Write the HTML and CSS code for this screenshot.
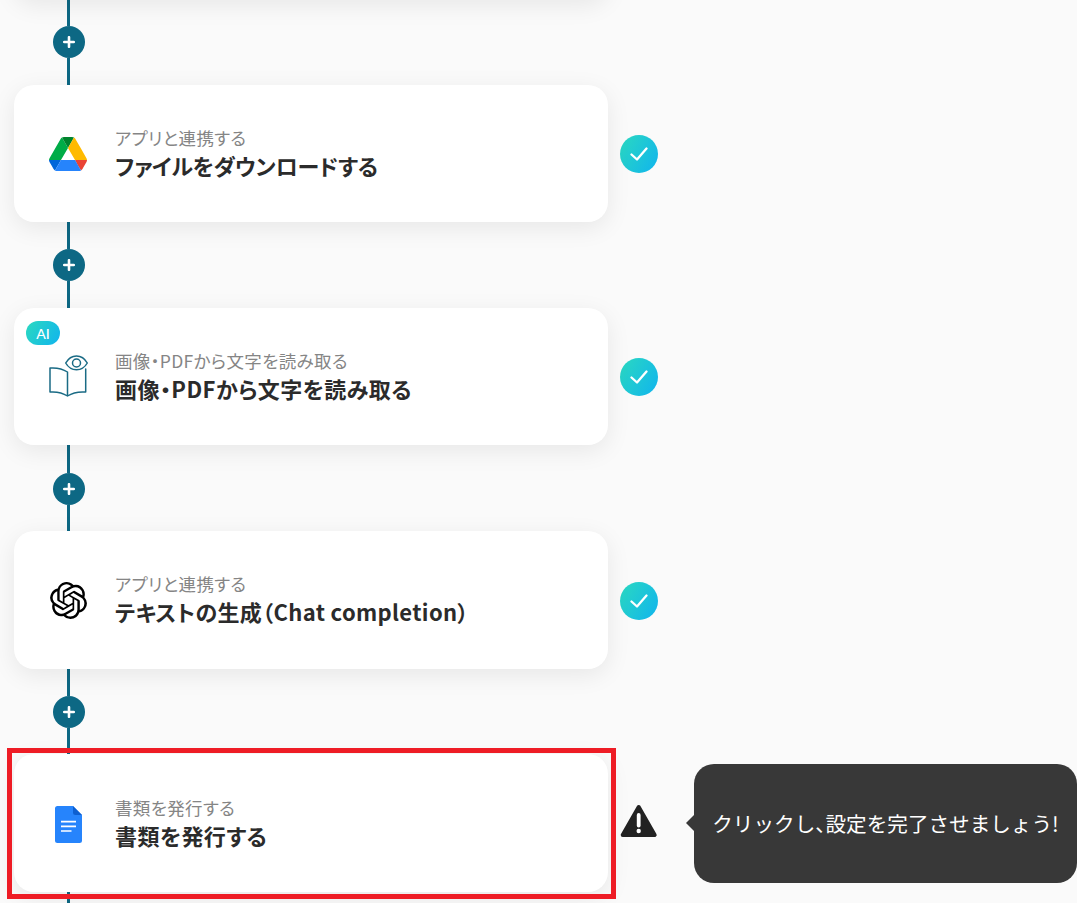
FILE: index.html
```html
<!DOCTYPE html>
<html lang="ja">
<head>
<meta charset="utf-8">
<title>フロー</title>
<link rel="stylesheet" href="styles.css">
</head>
<body>
<main class="flow">
  <div class="row row-prev"><div class="card"></div></div>

  <div class="connector"><span class="line"></span><span class="add"><svg viewBox="0 0 12 12" width="12" height="12"><path d="M6 1.2v9.6M1.2 6h9.6" stroke="#fff" stroke-width="2.6" stroke-linecap="round"/></svg></span><span class="line"></span></div>
  <div class="row">
    <div class="card">
      <div class="icon icon-left"><svg viewBox="0 0 87.3 78" width="38" height="34"><path d="m6.6 66.85 3.85 6.65c.8 1.4 1.95 2.5 3.3 3.3l13.75-23.8h-27.5c0 1.55.4 3.1 1.2 4.5z" fill="#0066da"/><path d="m43.65 25-13.75-23.8c-1.35.8-2.5 1.9-3.3 3.3l-25.4 44a9.06 9.06 0 0 0 -1.2 4.5h27.5z" fill="#00ac47"/><path d="m73.55 76.8c1.35-.8 2.5-1.9 3.3-3.3l1.6-2.75 7.65-13.25c.8-1.4 1.2-2.95 1.2-4.5h-27.502l5.852 11.5z" fill="#ea4335"/><path d="m43.65 25 13.75-23.8c-1.35-.8-2.9-1.2-4.5-1.2h-18.5c-1.6 0-3.15.45-4.5 1.2z" fill="#00832d"/><path d="m59.8 53h-32.3l-13.75 23.8c1.35.8 2.9 1.2 4.5 1.2h50.8c1.6 0 3.15-.45 4.5-1.2z" fill="#2684fc"/><path d="m73.4 26.5-12.7-22c-.8-1.4-1.95-2.5-3.3-3.3l-13.75 23.8 16.15 28h27.45c0-1.55-.4-3.1-1.2-4.5z" fill="#ffba00"/></svg></div>
      <div class="text"><p class="sub">アプリと連携する</p><p class="title title-kana">ファイルをダウンロードする</p></div>
    </div>
    <span class="status"><svg viewBox="0 0 18 14" width="18" height="14"><path d="M1.500 7.500l5.500 5L16.500 1.500" fill="none" stroke="#fff" stroke-width="2.300" stroke-linecap="round" stroke-linejoin="round"/></svg></span>
  </div>

  <div class="connector"><span class="line"></span><span class="add"><svg viewBox="0 0 12 12" width="12" height="12"><path d="M6 1.2v9.6M1.2 6h9.6" stroke="#fff" stroke-width="2.6" stroke-linecap="round"/></svg></span><span class="line"></span></div>
  <div class="row">
    <div class="card">
      <span class="badge">AI</span>
      <div class="icon"><svg viewBox="0 0 39 43" width="39" height="43" fill="none" stroke="#1a6b85" stroke-width="1.500" stroke-linejoin="round" stroke-linecap="round"><path d="M18.500 41V17C14 14 7.500 12.500 1 13V37c6.500-.5 13 1 17.500 4 4.500-3 11.500-4.500 18.200-4V14"/><path d="M16.700 8C19 4 23.500 1 27.500 1s8.500 3 10.800 7C36 12 31.500 14.700 27.500 14.700S19 12 16.700 8z" fill="#fff"/><circle cx="27.500" cy="8" r="4"/></svg></div>
      <div class="text"><p class="sub">画像・PDFから文字を読み取る</p><p class="title">画像・PDFから文字を読み取る</p></div>
    </div>
    <span class="status"><svg viewBox="0 0 18 14" width="18" height="14"><path d="M1.500 7.500l5.500 5L16.500 1.500" fill="none" stroke="#fff" stroke-width="2.300" stroke-linecap="round" stroke-linejoin="round"/></svg></span>
  </div>

  <div class="connector"><span class="line"></span><span class="add"><svg viewBox="0 0 12 12" width="12" height="12"><path d="M6 1.2v9.6M1.2 6h9.6" stroke="#fff" stroke-width="2.6" stroke-linecap="round"/></svg></span><span class="line"></span></div>
  <div class="row">
    <div class="card">
      <div class="icon icon-low"><svg viewBox="0 0 24 24" width="37" height="37"><path fill="#000" d="M22.2819 9.8211a5.9847 5.9847 0 0 0-.5157-4.9108 6.0462 6.0462 0 0 0-6.5098-2.9A6.0651 6.0651 0 0 0 4.9807 4.1818a5.9847 5.9847 0 0 0-3.9977 2.9 6.0462 6.0462 0 0 0 .7427 7.0966 5.98 5.98 0 0 0 .511 4.9107 6.051 6.051 0 0 0 6.5146 2.9001A5.9847 5.9847 0 0 0 13.2599 24a6.0557 6.0557 0 0 0 5.7718-4.2058 5.9894 5.9894 0 0 0 3.9977-2.9001 6.0557 6.0557 0 0 0-.7475-7.0729zm-9.022 12.6081a4.4755 4.4755 0 0 1-2.8764-1.0408l.1419-.0804 4.7783-2.7582a.7948.7948 0 0 0 .3927-.6813v-6.7369l2.02 1.1686a.071.071 0 0 1 .038.052v5.5826a4.504 4.504 0 0 1-4.4945 4.4944zm-9.6607-4.1254a4.4708 4.4708 0 0 1-.5346-3.0137l.142.0852 4.783 2.7582a.7712.7712 0 0 0 .7806 0l5.8428-3.3685v2.3324a.0804.0804 0 0 1-.0332.0615L9.74 19.9502a4.4992 4.4992 0 0 1-6.1408-1.6464zM2.3408 7.8956a4.485 4.485 0 0 1 2.3655-1.9728V11.6a.7664.7664 0 0 0 .3879.6765l5.8144 3.3543-2.0201 1.1685a.0757.0757 0 0 1-.071 0l-4.8303-2.7865A4.504 4.504 0 0 1 2.3408 7.872zm16.5963 3.8558L13.1038 8.364 15.1192 7.2a.0757.0757 0 0 1 .071 0l4.8303 2.7913a4.4944 4.4944 0 0 1-.6765 8.1042v-5.6772a.79.79 0 0 0-.407-.667zm2.0107-3.0231l-.142-.0852-4.7735-2.7818a.7759.7759 0 0 0-.7854 0L9.409 9.2297V6.8974a.0662.0662 0 0 1 .0284-.0615l4.8303-2.7866a4.4992 4.4992 0 0 1 6.6802 4.66zM8.3065 12.863l-2.02-1.1638a.0804.0804 0 0 1-.038-.0567V6.0742a4.4992 4.4992 0 0 1 7.3757-3.4537l-.142.0805L8.704 5.459a.7948.7948 0 0 0-.3927.6813zm1.0976-2.3654l2.602-1.4998 2.6069 1.4998v2.9994l-2.5974 1.4997-2.6067-1.4997Z"/></svg></div>
      <div class="text"><p class="sub">アプリと連携する</p><p class="title title-paren">テキストの生成（Chat completion）</p></div>
    </div>
    <span class="status"><svg viewBox="0 0 18 14" width="18" height="14"><path d="M1.500 7.500l5.500 5L16.500 1.500" fill="none" stroke="#fff" stroke-width="2.300" stroke-linecap="round" stroke-linejoin="round"/></svg></span>
  </div>

  <div class="connector"><span class="line"></span><span class="add"><svg viewBox="0 0 12 12" width="12" height="12"><path d="M6 1.2v9.6M1.2 6h9.6" stroke="#fff" stroke-width="2.6" stroke-linecap="round"/></svg></span><span class="line"></span></div>
  <div class="row">
    <div class="card">
      <span class="frame"></span>
      <div class="icon icon-lower"><svg viewBox="0 0 27 37" width="27" height="37"><path d="M2.500 0H18l9 9v25.500a2.500 2.500 0 0 1-2.500 2.500h-22A2.500 2.500 0 0 1 0 34.500v-32A2.500 2.500 0 0 1 2.500 0z" fill="#2684fc"/><path d="M18 0l9 9h-6.500A2.500 2.500 0 0 1 18 6.500z" fill="#0d5fd0"/><path d="M6 15.600h15M6 20.300h15M6 25h10.500" stroke="#fff" stroke-width="1.700" fill="none"/></svg></div>
      <div class="text"><p class="sub">書類を発行する</p><p class="title">書類を発行する</p></div>
    </div>
    <span class="warn"><svg viewBox="0 0 38 38" width="38" height="38"><path d="M18.700 3L34.700 31H2.700z" fill="#222" stroke="#222" stroke-width="4" stroke-linejoin="round"/><path d="M18.700 11v10.500" stroke="#fff" stroke-width="3.800" stroke-linecap="round"/><circle cx="18.700" cy="27" r="2.200" fill="#fff"/></svg></span>
    <div class="tip"><span>クリックし<span class="punct">、</span>設定を完了させましょう!</span></div>
  </div>

  <div class="connector"><span class="line"></span></div>
</main>
</body>
</html>
```

FILE: styles.css
```css
* { box-sizing: border-box; }
html, body { margin: 0; height: 100%; }
body {
  height: 903px;
  overflow: hidden;
  background: #fafafa;
  font-family: "Noto Sans CJK JP", "Noto Sans", sans-serif;
  font-feature-settings: "palt";
}
.flow { margin-top: -138.16px; padding-left: 14px; }
.row { display: flex; align-items: center; }
.card {
  position: relative;
  display: flex;
  align-items: center;
  gap: 27px;
  width: 594px;
  height: 137.3px;
  padding-left: 35px;
  background: #fff;
  border-radius: 20px;
  box-shadow: 0 6px 24px rgba(0, 0, 0, .08);
  flex: none;
}
.connector {
  display: flex;
  flex-direction: column;
  align-items: center;
  width: 32px;
  height: 85.86px;
  margin-left: 39px;
}
.line { flex: 1; width: 3px; margin-right: 1px; background: #0d6884; }
.line:first-child { flex: none; height: 27.1px; }
.line:only-child { height: 85.86px; }
.add {
  display: flex;
  align-items: center;
  justify-content: center;
  flex: none;
  width: 32px;
  height: 32px;
  border-radius: 50%;
  background: #0d6884;
}
.icon {
  display: flex;
  align-items: center;
  justify-content: center;
  flex: none;
  width: 39px;
}
.icon-left { justify-content: flex-start; }
.icon-low { margin-top: 1.2px; }
.icon-lower { margin-top: 2px; }
.text { margin-top: 0; }
.text p { margin: 0; }
.sub { font-size: 17.5px; line-height: 24px; color: #858585; letter-spacing: .02em; }
.title { margin-top: -1px !important; font-size: 22px; line-height: 32px; font-weight: 700; color: #2b2b2b; letter-spacing: .02em; }
.title-kana { letter-spacing: -.18px; }
.title-paren { letter-spacing: .35px; }
.status {
  display: flex;
  align-items: center;
  justify-content: center;
  flex: none;
  width: 38px;
  height: 38px;
  margin-left: 12px;
  margin-top: 1.3px;
  border-radius: 50%;
  background: linear-gradient(120deg, #2bd9c0, #10b4ee);
}
.warn { display: flex; flex: none; width: 38px; margin-left: 12px; }
.badge {
  position: absolute;
  left: 12px;
  top: 13px;
  display: flex;
  align-items: center;
  justify-content: center;
  width: 34px;
  height: 24px;
  border-radius: 12px;
  background: linear-gradient(120deg, #2bd9c0, #10b4ee);
  color: #fff;
  font-family: "Lato", sans-serif;
  font-size: 14px;
  font-weight: 500;
}
.frame {
  position: absolute;
  left: -7px;
  right: -8px;
  top: -6px;
  bottom: -7px;
  border: 5px solid #ee1c25;
  pointer-events: none;
}
.tip {
  position: relative;
  flex: none;
  display: flex;
  align-items: center;
  justify-content: center;
  width: 383px;
  height: 119px;
  margin-left: 36px;
  border-radius: 20px;
  background: #383838;
  color: #fff;
  font-size: 20.6px;
  font-feature-settings: normal;
}
.punct { font-feature-settings: "halt"; }
.tip::before {
  content: "";
  position: absolute;
  left: -8px;
  top: 50%;
  width: 16px;
  height: 16px;
  margin-top: -8px;
  background: #383838;
  clip-path: polygon(0 50%, 50% 0, 50% 100%);
}
```
